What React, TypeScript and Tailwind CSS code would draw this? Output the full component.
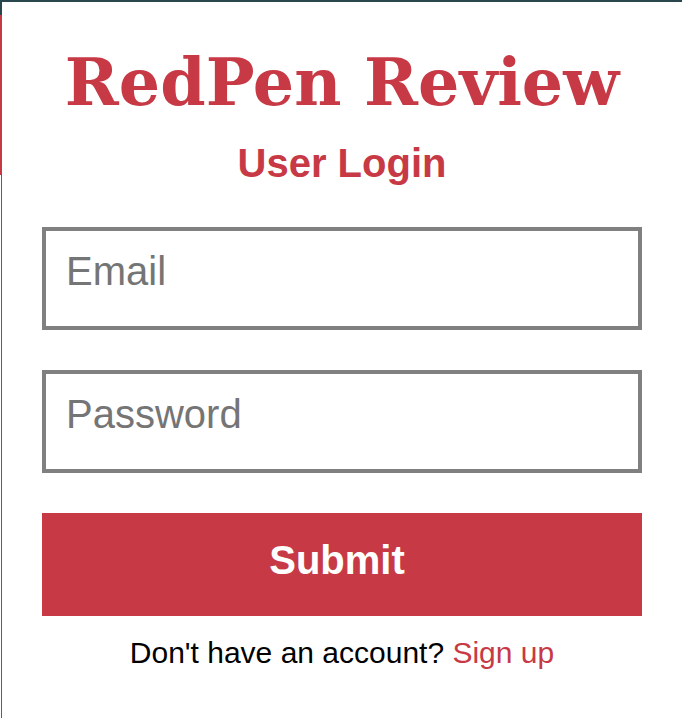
import React from 'react';

export default function App() {
  return (
    <div className="min-h-[718px] bg-white flex flex-col" style={{ fontFamily: '"Liberation Sans", Arial, sans-serif' }}>
      {/* top window edge */}
      <div className="relative z-10 h-[2px] bg-[#28474d] shadow-[0_2px_8px_rgba(0,0,0,0.07)]" />

      <div className="flex flex-1">
        {/* left window edge */}
        <div className="w-[2px] flex flex-col">
          <div className="h-[13px] bg-[#28474d]" />
          <div className="h-[160px] bg-[#c73a45]" />
          <div className="flex-1 border-r border-[#5f5f5f]" />
        </div>

        <main className="flex-1 flex flex-col items-center">
          <h1
            className="mt-[48px] text-[65px] leading-none font-bold text-[#c73a45]"
            style={{ fontFamily: '"DejaVu Serif", Georgia, serif' }}
          >
            RedPen Review
          </h1>
          <h2 className="mt-[28px] text-[40px] leading-none font-bold text-[#c73a45]">User Login</h2>

          <form className="mt-[44px] w-[600px] flex flex-col gap-[40px]" onSubmit={(e) => e.preventDefault()}>
            <input
              type="email"
              placeholder="Email"
              className="h-[103px] w-full border-4 border-[#808080] bg-white px-[20px] pb-[14px] text-[40px] text-black placeholder:text-[#757575] outline-none"
            />
            <input
              type="password"
              placeholder="Password"
              className="h-[103px] w-full border-4 border-[#808080] bg-white px-[20px] pb-[14px] text-[40px] text-black placeholder:text-[#757575] outline-none"
            />
            <button
              type="submit"
              className="h-[103px] w-full bg-[#c73a45] text-white text-[40px] font-bold pb-[10px] pr-[10px]"
            >
              Submit
            </button>
          </form>

          <p className="mt-[22px] text-[30px] leading-none text-black">
            Don't have an account? <a href="#" className="text-[#c73a45]">Sign up</a>
          </p>
        </main>
      </div>
    </div>
  );
}
